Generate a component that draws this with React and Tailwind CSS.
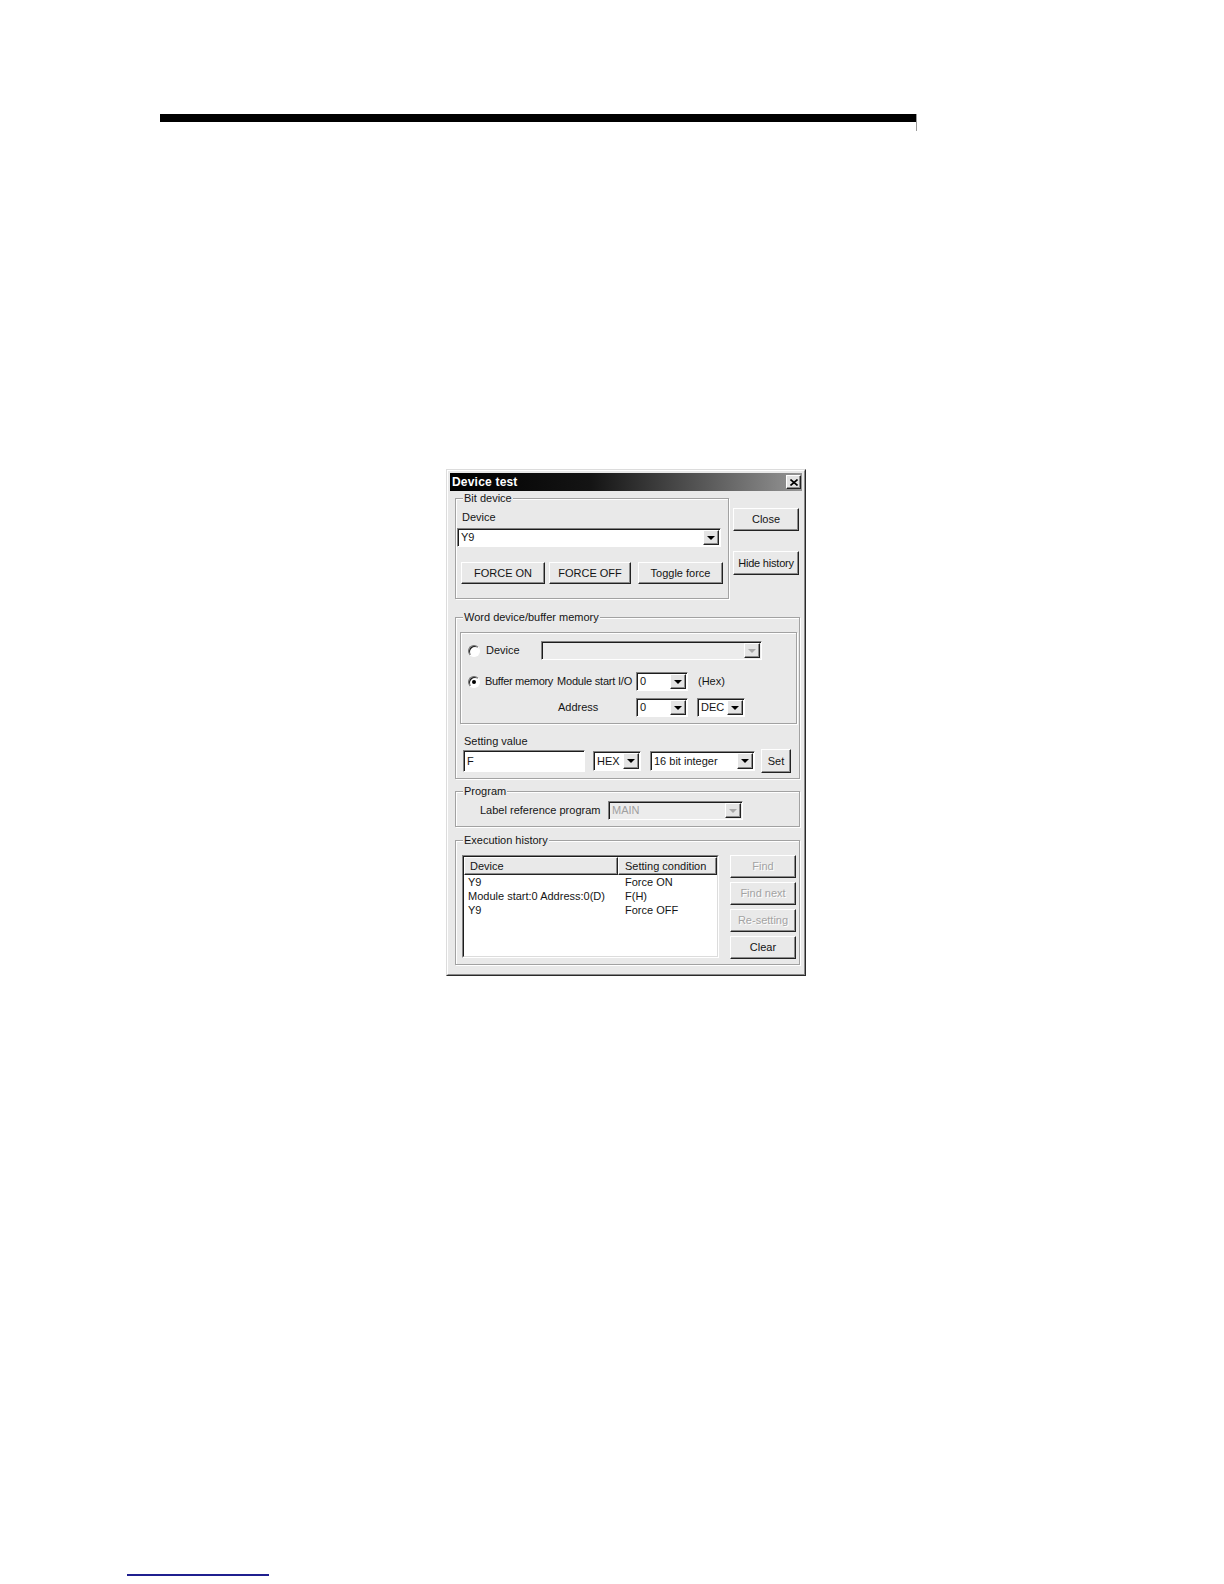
const raised =
  'border border-t-white border-l-white border-r-[#222] border-b-[#222] shadow-[inset_-1px_-1px_0_#8c8c8c]';
const sunken =
  'border border-t-[#828282] border-l-[#828282] border-r-white border-b-white shadow-[inset_1px_1px_0_#1c1c1c]';

function Button({ children, disabled, className = '' }) {
  return (
    <div
      className={`flex shrink-0 items-center justify-center whitespace-nowrap bg-[#e9e9e9] ${raised} ${
        disabled ? 'text-[#a3a3a3] [text-shadow:1px_1px_0_#fff]' : 'text-[#141414]'
      } ${className}`}
    >
      {children}
    </div>
  );
}

function Arrow({ disabled }) {
  return (
    <div className={`flex w-[16px] shrink-0 items-center justify-center bg-[#e4e4e4] ${raised}`}>
      <span
        className={`h-0 w-0 border-x-[4px] border-t-[4px] border-x-transparent ${
          disabled ? 'border-t-[#a8a8a8]' : 'border-t-black'
        }`}
      />
    </div>
  );
}

function Combo({ value = '', disabled, className = '' }) {
  return (
    <div
      className={`flex shrink-0 p-[1px] ${sunken} ${
        disabled ? 'bg-[#ececec] text-[#a0a0a0]' : 'bg-white text-[#141414]'
      } ${className}`}
    >
      <span className="flex flex-1 items-center pl-[2px]">{value}</span>
      <Arrow disabled={disabled} />
    </div>
  );
}

function Radio({ checked }) {
  return (
    <span className="ml-[7px] flex h-[12px] w-[12px] shrink-0 items-center justify-center rounded-full border border-t-[#6e6e6e] border-l-[#6e6e6e] border-r-white border-b-white bg-white shadow-[inset_1px_1px_0_#1c1c1c]">
      {checked && <span className="h-[4px] w-[4px] rounded-full bg-black" />}
    </span>
  );
}

function Group({ label, className = '', children }) {
  return (
    <div
      className={`shrink-0 border border-[#a2a2a2] shadow-[inset_1px_1px_0_#fff,1px_1px_0_#fff] ${className}`}
    >
      <div className="-mt-[7px] ml-[7px] w-fit bg-[#e9e9e9] px-[1px] leading-[13px]">{label}</div>
      {children}
    </div>
  );
}

const history = [
  ['Y9', 'Force ON'],
  ['Module start:0 Address:0(D)', 'F(H)'],
  ['Y9', 'Force OFF'],
];

function DeviceTest() {
  return (
    <div className="ml-[446px] mt-[338px] h-[507px] w-[360px] border border-t-[#dcdcdc] border-l-[#dcdcdc] border-r-[#2a2a2a] border-b-[#2a2a2a] bg-[#e9e9e9] text-[11px] text-[#151515]">
      <div className="h-full border border-t-white border-l-white border-r-[#8a8a8a] border-b-[#8a8a8a] p-[2px]">
        {/* title bar */}
        <div className="flex h-[18px] items-center bg-[linear-gradient(to_right,#000_0%,#141414_40%,#5e5e5e_75%,#959595_100%)] pl-[2px] pr-[1px]">
          <span className="text-[12px] font-bold tracking-[0.2px] text-white">Device test</span>
          <div className={`ml-auto flex h-[14px] w-[15px] items-center justify-center bg-[#e2e2e2] ${raised}`}>
            <svg width="8" height="7" viewBox="0 0 8 7">
              <path d="M0.5 0.5L7.5 6.5M7.5 0.5L0.5 6.5" stroke="#000" strokeWidth="1.6" />
            </svg>
          </div>
        </div>

        {/* bit device + side buttons */}
        <div className="ml-[5px] mt-[7px] flex items-start">
          <Group label="Bit device" className="h-[101px] w-[274px]">
            <div className="ml-[6px] mt-[6px] leading-[12px]">Device</div>
            <Combo value="Y9" className="ml-[1px] mt-[5px] h-[19px] w-[264px]" />
            <div className="ml-[5px] mt-[15px] flex">
              <Button className="h-[22px] w-[84px]">FORCE ON</Button>
              <Button className="ml-[4px] h-[22px] w-[82px]">FORCE OFF</Button>
              <Button className="ml-[7px] h-[22px] w-[85px]">Toggle force</Button>
            </div>
          </Group>
          <div className="ml-[4px] flex w-[66px] flex-col">
            <Button className="mt-[10px] h-[23px]">Close</Button>
            <Button className="mt-[20px] h-[24px] tracking-[-0.2px]">Hide history</Button>
          </div>
        </div>

        {/* word device */}
        <Group label="Word device/buffer memory" className="ml-[5px] mt-[18px] h-[162px] w-[345px]">
          <div className="ml-[4px] mt-[8px] h-[92px] w-[337px] border border-[#a2a2a2] shadow-[inset_1px_1px_0_#fff,1px_1px_0_#fff]">
            <div className="mt-[8px] flex h-[19px] items-center">
              <Radio />
              <span className="ml-[6px] w-[55px] shrink-0">Device</span>
              <Combo disabled className="h-[19px] w-[221px]" />
            </div>
            <div className="mt-[12px] flex h-[19px] items-center whitespace-nowrap">
              <Radio checked />
              <span className="ml-[5px] w-[72px] shrink-0 tracking-[-0.3px]">Buffer memory</span>
              <span className="w-[79px] shrink-0 tracking-[-0.2px]">Module start I/O</span>
              <Combo value="0" className="h-[19px] w-[52px]" />
              <span className="ml-[10px]">(Hex)</span>
            </div>
            <div className="mt-[7px] flex h-[19px] items-center">
              <span className="ml-[97px] w-[78px] shrink-0">Address</span>
              <Combo value="0" className="h-[19px] w-[52px]" />
              <Combo value="DEC" className="ml-[9px] h-[19px] w-[48px]" />
            </div>
          </div>
          <div className="ml-[8px] mt-[11px] leading-[12px]">Setting value</div>
          <div className="mt-[2px] flex h-[24px] items-center">
            <div className={`ml-[7px] flex h-[22px] w-[122px] items-center bg-white pl-[3px] ${sunken}`}>F</div>
            <Combo value="HEX" className="ml-[8px] h-[20px] w-[48px]" />
            <Combo value="16 bit integer" className="ml-[9px] h-[20px] w-[105px]" />
            <Button className="ml-[6px] h-[24px] w-[30px]">Set</Button>
          </div>
        </Group>

        {/* program */}
        <Group label="Program" className="ml-[5px] mt-[12px] h-[36px] w-[345px]">
          <div className="mt-[3px] flex h-[19px] items-center">
            <span className="ml-[24px] w-[128px] shrink-0 whitespace-nowrap">Label reference program</span>
            <Combo disabled value="MAIN" className="h-[19px] w-[135px]" />
          </div>
        </Group>

        {/* execution history */}
        <Group label="Execution history" className="ml-[5px] mt-[13px] h-[125px] w-[345px]">
          <div className="mt-[8px] flex items-start">
            <div className="ml-[6px] h-[103px] w-[257px] shrink-0 border border-t-[#828282] border-l-[#828282] border-r-white border-b-white bg-white">
              <div className="h-full border border-t-[#1c1c1c] border-l-[#1c1c1c] border-r-[#dcdcdc] border-b-[#dcdcdc]">
                <div className="flex h-[18px]">
                  <div className={`flex w-[154px] shrink-0 items-center bg-[#e9e9e9] pl-[5px] ${raised}`}>Device</div>
                  <div className={`flex flex-1 items-center bg-[#e9e9e9] pl-[6px] ${raised}`}>Setting condition</div>
                </div>
                {history.map(([dev, cond], i) => (
                  <div key={i} className="flex h-[14px] items-center whitespace-nowrap">
                    <span className="w-[154px] shrink-0 pl-[4px]">{dev}</span>
                    <span className="pl-[7px]">{cond}</span>
                  </div>
                ))}
              </div>
            </div>
            <div className="ml-[11px] flex w-[66px] flex-col gap-[4px]">
              <Button disabled className="h-[23px]">Find</Button>
              <Button disabled className="h-[23px]">Find next</Button>
              <Button disabled className="h-[23px]">Re-setting</Button>
              <Button className="h-[23px]">Clear</Button>
            </div>
          </div>
        </Group>
      </div>
    </div>
  );
}

export default function App() {
  return (
    <div className="min-h-[1584px] w-[1224px] bg-white font-['Liberation_Sans',Arial,sans-serif]">
      <div className="flex items-start pl-[160px] pt-[114px]">
        <div className="h-[8px] w-[756px] bg-black" />
        <div className="h-[17px] w-px bg-[#9a9a9a]" />
      </div>
      <DeviceTest />
      <div className="ml-[127px] mt-[598px] h-[2px] w-[142px] bg-[#1f1f8f]" />
    </div>
  );
}
